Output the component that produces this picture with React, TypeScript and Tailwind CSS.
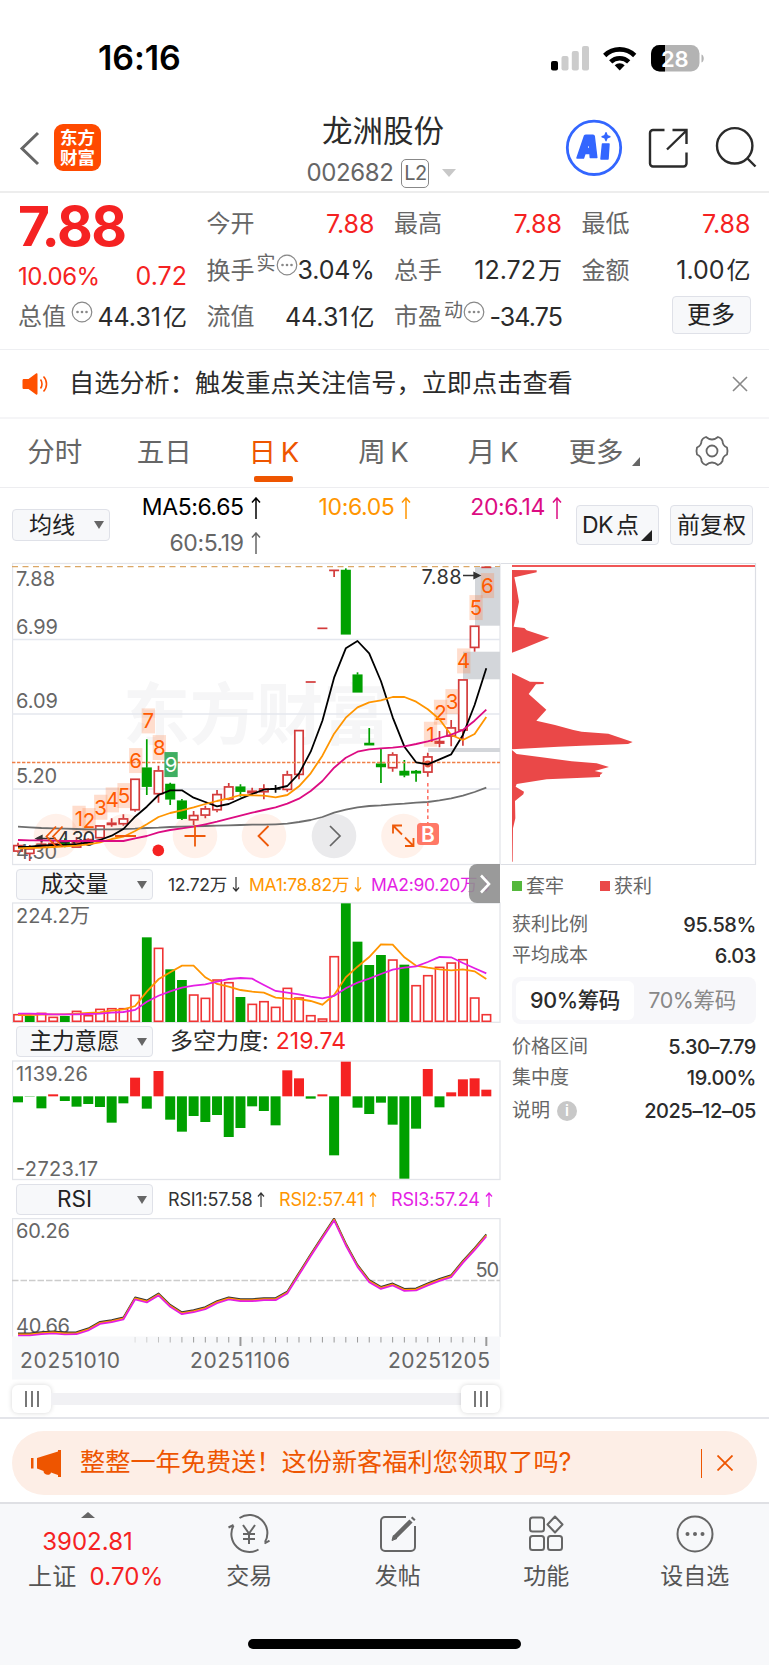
import type { ReactNode } from 'react'

const STEP = 11.708
const cx = (i: number) => 18 + STEP * i

// [kind, high, top, bottom, low], 3 units per px, measured down from y = 555
type Candle = [string, number, number, number, number]

const candles: Candle[] = [
  ['r', 863, 870, 890, 893], ['r', 870, 880, 897, 918], ['r', 852, 866, 876, 880], ['r', 858, 864, 872, 875],
  ['g', 850, 858, 872, 877], ['r', 846, 862, 878, 878], ['r', 850, 852, 868, 870], ['r', 811, 811, 850, 850],
  ['r', 790, 803, 810, 815], ['r', 778, 790, 808, 812], ['r', 671, 671, 766, 770], ['g', 553, 638, 695, 720],
  ['r', 632, 646, 718, 743], ['g', 683, 687, 733, 750], ['g', 732, 737, 791, 795], ['r', 768, 780, 796, 810],
  ['r', 752, 760, 782, 790], ['r', 705, 717, 766, 772], ['r', 684, 694, 734, 736], ['g', 688, 695, 710, 725],
  ['r', 698, 707, 715, 720], ['r', 688, 700, 712, 733], ['k', 690, 702, 704, 713], ['r', 647, 658, 705, 710],
  ['r', 525, 525, 660, 673], ['d', 381, 381, 381, 381], ['d', 220, 220, 220, 220], ['d', 46, 46, 46, 66],
  ['g', 40, 45, 238, 238], ['g', 352, 359, 412, 412], ['g', 519, 564, 570, 570], ['g', 582, 626, 636, 684],
  ['r', 592, 598, 640, 650], ['g', 615, 648, 661, 667], ['g', 645, 648, 655, 680], ['r', 593, 604, 653, 665],
  ['r', 528, 558, 566, 577], ['r', 495, 517, 545, 574], ['r', 373, 373, 527, 572], ['r', 212, 212, 279, 290],
  ['d', 37, 37, 37, 37],
]

const ma5 = [876, 875, 872, 870, 869, 868, 862, 855, 842, 822, 785, 755, 720, 706, 706, 728, 741, 754, 747, 731, 717, 704, 701, 693, 656, 590, 497, 368, 280, 258, 295, 378, 487, 575, 622, 628, 613, 598, 540, 450, 340]
const ma10 = [880, 879, 878, 876, 874, 872, 868, 862, 852, 845, 828, 808, 786, 774, 766, 757, 747, 738, 730, 720, 721, 722, 727, 720, 694, 655, 602, 536, 488, 457, 442, 436, 426, 426, 440, 463, 493, 540, 555, 537, 486]
const ma20 = [855, 856, 856, 857, 858, 858, 858, 858, 858, 858, 850, 843, 832, 825, 820, 815, 808, 800, 791, 782, 773, 765, 757, 746, 731, 708, 678, 638, 608, 590, 583, 580, 578, 574, 567, 559, 549, 539, 525, 497, 464]
const ma60 = [815, 817, 819, 820, 821, 822, 823, 823, 823, 822, 821, 819, 818, 816, 815, 814, 813, 812, 811, 810, 809, 809, 808, 806, 801, 795, 786, 773, 764, 757, 753, 751, 748, 746, 743, 741, 736, 730, 722, 711, 698]

const volume = [462, 468, 458, 470, 468, 452, 465, 446, 444, 444, 404, 232, 263, 328, 360, 403, 413, 358, 366, 411, 431, 423, 440, 383, 412, 465, 475, 288, 130, 245, 315, 285, 298, 314, 375, 345, 320, 307, 297, 412, 462]
const volumeDown = [1, 4, 11, 13, 14, 19, 28, 29, 30, 31, 33]
const volMa1 = [465, 465, 464, 463, 463, 461, 459, 457, 452, 448, 438, 395, 358, 337, 317, 317, 352, 372, 380, 390, 395, 398, 413, 416, 417, 423, 434, 405, 352, 320, 291, 253, 254, 292, 317, 323, 328, 331, 328, 334, 357]
const volMa2 = [461, 461, 462, 463, 463, 463, 462, 461, 458, 456, 450, 425, 407, 394, 383, 377, 373, 365, 357, 354, 356, 375, 393, 398, 403, 410, 415, 408, 385, 368, 356, 342, 329, 323, 319, 306, 291, 292, 309, 325, 340]

const force = [727, 710, 745, 703, 723, 740, 732, 741, 788, 730, 653, 746, 633, 779, 815, 768, 786, 765, 831, 804, 739, 753, 796, 631, 655, 716, 703, 886, 605, 743, 762, 728, 794, 956, 806, 627, 742, 697, 658, 655, 689]

const rsi = [463, 463, 459, 457, 460, 459, 448, 428, 423, 415, 355, 364, 343, 377, 399, 393, 384, 366, 355, 360, 360, 357, 357, 337, 281, 225, 171, 118, 193, 257, 303, 323, 313, 329, 328, 313, 299, 288, 245, 207, 166]

// TD sequence marks: [digit, x, centre y]
const marks: [string, number, number][] = [
  ['1', 79, 790], ['2', 89, 797], ['3', 100.7, 757], ['4', 112.3, 735], ['5', 124, 722], ['6', 135.7, 617],
  ['7', 148.3, 498], ['8', 159.3, 578], ['9', 171, 629],
  ['1', 430.5, 538], ['2', 440.5, 472], ['3', 452, 440], ['4', 463.7, 318], ['5', 476, 158], ['6', 487.4, 92],
]

const line = (ys: number[], top: number, dy = 0) =>
  ys.map((y, i) => `${cx(i).toFixed(1)},${(top + y / 3 + dy).toFixed(1)}`).join(' ')

function Label({ x, y, w, size = 20, fill = '#666', weight = 400, children }: {
  x: number; y: number; w: number; size?: number; fill?: string; weight?: number; children: ReactNode
}) {
  return (
    <text x={x} y={y + size * 0.364} fontSize={size} fill={fill} fontWeight={weight} textLength={w}>
      {children}
    </text>
  )
}

function Dots() {
  return (
    <svg className="mb-[11px] h-[22px] w-[22px] shrink-0" viewBox="0 0 22 22">
      <circle cx="11" cy="11" r="9.8" fill="none" stroke="#888" strokeWidth="1.2" />
      {[6.5, 11, 15.5].map((x) => <circle key={x} cx={x} cy="11" r="1.3" fill="#888" />)}
    </svg>
  )
}

function Stat({ label, sup, dots, value, unit, className = 'text-[#2b2b2b]' }: {
  label: string; sup?: string; dots?: boolean; value: string; unit?: string; className?: string
}) {
  return (
    <div className="flex h-[46.5px] items-center text-2xl leading-none whitespace-nowrap">
      <span className="text-[#666]">{label}</span>
      {sup && <span className="mb-[14px] ml-[2px] text-[19px] leading-none text-[#666]">{sup}</span>}
      {dots && !sup && <i className="w-[5px]" />}
      {dots && <Dots />}
      <span className={`ml-auto text-[25px] leading-none ${className}`}>
        {value}
        {unit && <span className="ml-[2px] text-2xl leading-none">{unit}</span>}
      </span>
    </div>
  )
}

function Arrow({ down, small }: { down?: boolean; small?: boolean }) {
  return (
    <svg
      className={small ? 'ml-[5px] inline-block h-[15px] w-[8px] shrink-0' : 'ml-[7px] inline-block h-[22px] w-[10px] shrink-0'}
      viewBox={small ? '0 0 8 15' : '0 0 10 22'}
      fill="none"
      stroke="currentColor"
      strokeWidth={small ? 1.2 : 1.5}
    >
      {small && !down && <path d="M4 15V1M1 4.500L4 1L7 4.500" />}
      {small && down && <path d="M4 0V14M1 10.500L4 14L7 10.500" />}
      {!small && <path d="M5 22V1M1 5.500L5 1L9 5.500" />}
    </svg>
  )
}

function Caret() {
  return <svg className="h-2 w-[10px]" viewBox="0 0 10 8"><path d="M0 0h10L5 8z" fill="#666" /></svg>
}

function Picker({ label }: { label: string }) {
  return (
    <div className="ml-[4px] flex h-[31px] w-[137px] shrink-0 items-center rounded border border-[#dfe1e8] bg-[#f7f8fa]">
      <span className="flex-1 pr-[5px] text-center text-[22.500px] leading-none tracking-normal text-[#222]">{label}</span>
      <span className="mr-[5px] flex"><Caret /></span>
    </div>
  )
}

function Frame({ y, h }: { y: number; h: number }) {
  return <rect x="12.5" y={y} width="487.5" height={h} fill="none" stroke="#e3e5ea" strokeWidth="1.3" />
}

function PriceChart() {
  const Y = (v: number) => 555 + v / 3
  return (
    <svg className="block h-[304px] w-[489px]" viewBox="12 562 489 304">
      <text x="123" y="739" fontSize="67" fontWeight="700" fill="#f6f6f7" textLength="267">东方财富</text>
      <Frame y={563.5} h={301} />
      {[639.5, 714, 789].map((y) => <path key={y} d={`M12 ${y}H500`} stroke="#e4e7ee" strokeWidth="1.5" />)}
      <path d="M12 566.7H500" stroke="#dba766" strokeWidth="1.2" strokeDasharray="6 4.5" />
      <g fill="#d3d6da">
        <rect x="475" y="567" width="25" height="58.7" />
        <rect x="463" y="651.7" width="37" height="27.6" />
        <rect x="428" y="748" width="72" height="4" />
      </g>
      {[56, 125, 195, 264, 403.5].map((x) => <circle key={x} cx={x} cy="836" r="22.3" fill="#fff1ea" />)}
      <circle cx="334" cy="836" r="22.3" fill="#eaeaec" />
      {candles.map(([kind, hi, top, bottom, lo], i) => {
        const x = cx(i)
        const color = kind === 'g' ? '#00a000' : kind === 'k' ? '#111' : '#d33a3a'
        if (kind === 'd' || kind === 'k') {
          return <path key={i} d={`M${x - 5} ${Y(top)}h10M${x} ${Y(hi)}V${Y(lo)}`} stroke={color} strokeWidth="1.7" />
        }
        return (
          <g key={i} stroke={color} strokeWidth="1.7">
            <path d={`M${x} ${Y(hi)}V${Y(top)}M${x} ${Y(bottom)}V${Y(lo)}`} />
            <rect x={x - 4.2} y={Y(top) + 0.6} width="8.4" height={Math.max(Y(bottom) - Y(top) - 1.2, 1)} fill={kind === 'g' ? color : '#fff'} />
          </g>
        )
      })}
      <path d="M12 762.5H500" stroke="#f08048" strokeWidth="1.5" strokeDasharray="3.4 1.6" />
      <circle cx="427.8" cy="764" r="3.4" fill="#e0523a" />
      {marks.map(([n, x, y], i) => (
        <g key={i}>
          <rect x={x - 6.6} y={Y(y) - 12.6} width="13.3" height="25" fill={n === '9' ? '#3fae62' : '#ff7a3c'} fillOpacity={n === '9' ? 1 : 0.26} />
          <text x={x} y={Y(y) + 7.4} textAnchor="middle" fontSize="20.5" fill={n === '9' ? '#fff' : '#ff5a00'}>{n}</text>
        </g>
      ))}
      <Label x={16} y={578.5} w={39}>7.88</Label>
      <Label x={16} y={626.5} w={42}>6.99</Label>
      <Label x={16} y={701} w={42}>6.09</Label>
      <Label x={16} y={776} w={41}>5.20</Label>
      <Label x={57} y={838.5} w={38} fill="#333">4.30</Label>
      <path d="M36 838.5H56M36 838.5l6-3v6z" stroke="#333" strokeWidth="1.3" fill="#333" />
      <Label x={16} y={852} w={41}>4.30</Label>
      <Label x={421.500} y={576.5} w={40} fill="#333">7.88</Label>
      <path d="M463 575.5H479M480 575.5l-6-3v6z" stroke="#333" strokeWidth="1.3" fill="#333" />
      <g fill="none" strokeWidth="1.8" strokeLinejoin="round">
        <polyline points={line(ma60, 555)} stroke="#6e6e6e" />
        <polyline points={line(ma5, 555)} stroke="#000" />
        <polyline points={line(ma10, 555)} stroke="#ff9500" />
        <polyline points={line(ma20, 555)} stroke="#dc0c82" />
      </g>
      <g fill="none" stroke="#ee5a0a" strokeWidth="1.8">
        <path d="M56 826.500L46.500 836.500L56 846.500M62.500 826.500L53 836.500L62.500 846.500" />
        <path d="M115 836H136M184.500 836H205.500M195 825.500V846.500" />
        <path d="M268.500 826L258.500 836L268.500 846" />
        <path d="M402 834.500L393 825.500M393 833.500V825.500H402M405 837.500L413.500 846M413.500 838V846H405" />
      </g>
      <path d="M330 826L340 836L330 846" fill="none" stroke="#666" strokeWidth="1.7" />
      <circle cx="158.3" cy="850.4" r="5.8" fill="#f52222" />
      <path d="M427.800 783V823" stroke="#ff7468" strokeWidth="1.6" strokeDasharray="3.5 3" />
      <rect x="417" y="823" width="22" height="22" rx="3.500" fill="#ff7866" />
      <text x="428" y="841.500" textAnchor="middle" fontSize="21" fontWeight="600" fill="#fff">B</text>
    </svg>
  )
}

function ChipChart() {
  return (
    <svg className="block h-[304px] w-[268px]" viewBox="501 562 268 304">
      <path d="M501 563.5H755.500V864.500H501" fill="none" stroke="#dcdee4" strokeWidth="1.2" />
      <path d="M512 566H755" stroke="#f05656" strokeWidth="2" />
      <g transform="translate(500 555) scale(.33333)" fill="#ea4848">
        <path d="M36 45L110 46V52L43 67L50 100L57 140L50 175L41 215L73 219L80 226L148 248L73 279L36 293Z" />
        <path d="M36 354L90 380L131 381V387L108 388L86 417L139 464L109 497L165 510L220 525L245 530L325 536L398 561L384 567L245 572L175 575L36 583Z" />
        <path d="M36 585L50 597L125 607L215 619L290 625L327 636L284 648L308 653L300 660V666L248 668L140 673L50 687L47 695L72 710L70 718L45 738L46 790L39 820L38 920H36Z" />
      </g>
    </svg>
  )
}

function VolumeChart() {
  return (
    <svg className="block h-[121px] w-[489px]" viewBox="12 902 489 121">
      <Frame y={903} h={119.300} />
      {volume.map((v, i) => {
        const y = 860 + v / 3
        return volumeDown.includes(i)
          ? <rect key={i} x={cx(i) - 4.900} y={y} width="9.800" height={1022 - y} fill="#00a000" />
          : <rect key={i} x={cx(i) - 4.100} y={y + 0.700} width="8.400" height={Math.max(1021.300 - y - 0.700, 1)} fill="#fff" stroke="#f03434" strokeWidth="1.600" />
      })}
      <polyline points={line(volMa1, 860)} fill="none" stroke="#ff9500" strokeWidth="1.8" />
      <polyline points={line(volMa2, 860)} fill="none" stroke="#e41ee4" strokeWidth="1.8" />
      <Label x={16} y={916} w={74}>224.2万</Label>
    </svg>
  )
}

function ForceChart() {
  return (
    <svg className="block h-[121px] w-[489px]" viewBox="12 1060 489 121">
      <Frame y={1061} h={118.500} />
      {force.map((v, i) => (
        <rect
          key={i}
          x={cx(i) - 5}
          y={860 + Math.min(v, 709) / 3}
          width="10"
          height={Math.abs(v - 709) / 3}
          fill={v > 709 ? '#00a000' : '#f52222'}
        />
      ))}
      <Label x={16} y={1073.500} w={72}>1139.26</Label>
      <Label x={16} y={1168.500} w={82}>-2723.17</Label>
    </svg>
  )
}

function RsiChart() {
  return (
    <svg className="block h-[163px] w-[489px]" viewBox="12 1218 489 163">
      <path d="M12.500 1337V1218.700H500V1337" fill="none" stroke="#e3e5ea" strokeWidth="1.300" />
      <rect x="12" y="1336.500" width="488" height="43" fill="#f7f8fa" />
      <path d="M12 1280.400H500" stroke="#ccc" strokeWidth="1.500" strokeDasharray="6.500 2" />
      <Label x={16} y={1231} w={54}>60.26</Label>
      <Label x={16} y={1326} w={54}>40.66</Label>
      <Label x={475.500} y={1270} w={23.500}>50</Label>
      <g fill="none" strokeWidth="1.700" strokeLinejoin="round">
        <polyline points={line(rsi, 1180, -0.900)} stroke="#333" />
        <polyline points={line(rsi, 1180, 0.100)} stroke="#ff9500" />
        <polyline points={line(rsi, 1180, 1.200)} stroke="#e41ee4" />
      </g>
      {rsi.map((_, i) => i > 9 && (
        <path
          key={i}
          d={`M${cx(i)} 1337V${i === 19 || i === 40 ? 1346 : 1342.500}`}
          stroke="#999"
          strokeWidth={i === 19 || i === 40 ? 2 : 1}
          opacity={Math.min(1, (i - 8) / 7)}
        />
      ))}
      <Label x={20} y={1360} w={100} size={21}>20251010</Label>
      <Label x={190} y={1360} w={100} size={21}>20251106</Label>
      <Label x={388} y={1360} w={102} size={21}>20251205</Label>
    </svg>
  )
}

function Handle() {
  return (
    <div className="flex h-[28px] w-[39px] items-center justify-center gap-[4px] rounded-md bg-white shadow-[0_0_5px_rgba(0,0,0,0.16)]">
      <i className="h-4 w-[2px] bg-[#777]" />
      <i className="h-4 w-[2px] bg-[#777]" />
      <i className="h-4 w-[2px] bg-[#777]" />
    </div>
  )
}

function Info({ label, value, info }: { label: string; value: string; info?: boolean }) {
  return (
    <div className="flex h-[31px] items-center justify-between leading-none">
      <span className="flex items-center text-[19px] text-[#666]">
        {label}
        {info && <span className="ml-[7px] flex h-5 w-5 items-center justify-center rounded-full bg-[#c8c8c8] text-[15px] font-semibold leading-none text-white">i</span>}
      </span>
      <span className="text-xl font-medium leading-none tracking-[-0.4px] text-[#2b2b2b]">{value}</span>
    </div>
  )
}

function NavItem({ label, children }: { label: string; children: ReactNode }) {
  return (
    <div className="flex w-[148.500px] flex-col items-center">
      <svg className="mt-[8px] h-[44px] w-[44px]" viewBox="0 0 44 44" fill="none" stroke="#666" strokeWidth="2">{children}</svg>
      <span className="mt-[9px] text-[23px] leading-none text-[#555]">{label}</span>
    </div>
  )
}

const tabs = ['分时', '五日', '日 K', '周 K', '月 K']

export default function App() {
  return (
    <div className="flex h-[1665px] w-[769px] flex-col overflow-hidden bg-white font-['Inter','Noto_Sans_CJK_SC',sans-serif]">
      <div className="flex h-[108px] shrink-0 items-center pl-[98px] pt-[7px]">
        <span className="text-[34px] font-semibold leading-none tracking-[-0.1px] text-black">16:16</span>
        <svg className="ml-auto mr-[63px] h-[30px] w-[156px]" viewBox="550 42 156 30">
          <rect x="551" y="60" width="7" height="9.500" rx="2" fill="#000" />
          <g fill="#ccc">
            <rect x="561.500" y="55" width="7" height="14.500" rx="2" />
            <rect x="571.800" y="50" width="7" height="19.500" rx="2" />
            <rect x="582" y="45" width="7" height="24.500" rx="2" />
          </g>
          <g fill="none" stroke="#000" strokeWidth="4.600">
            <path d="M604.700 54.500a21.500 21.500 0 0 1 30 0" />
            <path d="M610.700 60.800a13 13 0 0 1 18 0" />
          </g>
          <path d="M619.700 69.500l-5-5.300a7.600 7.600 0 0 1 10 0z" />
          <rect x="651" y="44" width="48.500" height="26.500" rx="8.500" fill="#b3b3b3" />
          <path d="M665 44H659.500a8.500 8.500 0 0 0-8.500 8.500V62a8.500 8.500 0 0 0 8.500 8.500H665z" />
          <path d="M701.500 53.500c3 1 3 7 0 8z" fill="#b3b3b3" />
          <text x="661" y="65.500" fontSize="22" fontWeight="600" fill="#fff" textLength="27.500">28</text>
        </svg>
      </div>

      <div className="flex h-[85px] shrink-0 border-b-2 border-[#ededed]">
        <div className="flex w-[292px] items-center pl-[19px] pb-[4px]">
          <svg className="h-9 w-[22px]" viewBox="0 0 22 36"><path d="M19 3L3 18.500L19 34" fill="none" stroke="#666" strokeWidth="3" /></svg>
          <div className="ml-[13px] flex h-[47px] w-[47px] flex-col items-center justify-center rounded-[9px] bg-[#ff4a00] text-[17.500px] font-bold leading-[20px] text-white">
            <span>东方</span>
            <span>财富</span>
          </div>
        </div>
        <div className="flex w-[184px] flex-col items-center">
          <span className="mt-[8px] mr-[2px] text-[30.500px] leading-none text-[#2b2b2b]">龙洲股份</span>
          <div className="mt-[12px] flex items-center pr-[5px]">
            <span className="text-2xl leading-none tracking-[-0.4px] text-[#666]">002682</span>
            <span className="ml-[8px] flex h-[29px] w-[28px] items-center justify-center rounded-[5px] border-[1.500px] border-[#888] text-[20px] leading-none tracking-tight text-[#666]">L2</span>
            <svg className="ml-[13px] h-2 w-[14px]" viewBox="0 0 14 8"><path d="M0 0h14L7 8z" fill="#c8c8c8" /></svg>
          </div>
        </div>
        <svg className="ml-[84px] mt-[8px] h-[64px] w-[204px]" viewBox="560 116 204 64">
          <circle cx="594" cy="147.800" r="26.700" fill="none" stroke="#3366ff" strokeWidth="2.800" />
          <g fill="#3366ff" stroke="#3366ff" strokeWidth="1.500" strokeLinejoin="round">
            <path fillRule="evenodd" d="M577 158L584.500 136Q585 135.200 586 135.200H593Q594 135.200 594.200 136.200L596.800 157.500H590.300L590 153.500H585L583.500 158zM586.800 148.500H589.800L589.500 141.500z" />
            <path d="M602.500 144H609L608 159H601z" />
            <path d="M606 132.800l1.100 2.800 2.800 1.100-2.800 1.100-1.100 2.800-1.100-2.800-2.800-1.100 2.800-1.100z" />
          </g>
          <g fill="none" stroke="#2b2b2b" strokeWidth="2.400">
            <path d="M664.500 130H653a3 3 0 0 0-3 3V163.500a3 3 0 0 0 3 3H683.500a3 3 0 0 0 3-3V152.500M672.500 130H686.500V144M686.500 130.500L667 149.500" />
            <circle cx="734.700" cy="145.800" r="17.700" />
            <path d="M747.500 158.500L755.500 166.500" />
          </g>
        </svg>
      </div>

      <div className="flex h-[157px] shrink-0 gap-[19.500px] border-b border-[#eeeff2] pl-[18px]">
        <div className="w-[169px]">
          <div className="flex h-[66px] items-center text-[55px] font-bold leading-none tracking-[-1.500px] text-[#f52222]">7.88</div>
          <div className="flex h-[35px] items-center justify-between text-2xl leading-none tracking-[-0.4px] text-[#f52222]">
            <span>10.06%</span>
            <span className="text-[25px] leading-none tracking-normal">0.72</span>
          </div>
          <Stat label="总值" dots value="44.31" unit="亿" />
        </div>
        <div className="w-[168px] pt-[8px]">
          <Stat label="今开" value="7.88" className="text-[#f52222]" />
          <Stat label="换手" sup="实" dots value="3.04%" className="tracking-[-0.2px] text-[#2b2b2b]" />
          <Stat label="流值" value="44.31" unit="亿" />
        </div>
        <div className="w-[168px] pt-[8px]">
          <Stat label="最高" value="7.88" className="text-[#f52222]" />
          <Stat label="总手" value="12.72" unit="万" />
          <Stat label="市盈" sup="动" dots value="-34.75" className="tracking-[-0.9px] text-[#2b2b2b]" />
        </div>
        <div className="w-[169px] pt-[8px]">
          <Stat label="最低" value="7.88" className="text-[#f52222]" />
          <Stat label="金额" value="1.00" unit="亿" />
          <div className="mt-[2px] ml-auto flex h-[38px] w-[79px] items-center justify-center rounded border border-[#dfe1e8] bg-[#f7f8fa] text-2xl leading-none text-[#222]">更多</div>
        </div>
      </div>

      <div className="flex h-[69px] shrink-0 items-center border-b-2 border-[#f5f5f7] pl-[22px] pr-[21px]">
        <svg className="h-6 w-[26px]" viewBox="0 0 26 24">
          <path d="M2 7H6.500L14 1.500C15 1 15.500 1.500 15.500 2.500V21.500C15.500 22.500 15 23 14 22.500L6.500 17H2C1 17 .5 16.500 .5 15.500V8.500C.5 7.500 1 7 2 7z" fill="#ff5000" />
          <path d="M18.500 7.500c2 2.500 2 6.500 0 9M21.500 4.500c4 4 4 11 0 15" fill="none" stroke="#ff5000" strokeWidth="1.600" />
        </svg>
        <span className="ml-[21px] text-[25.200px] leading-none text-[#2b2b2b]">自选分析：触发重点关注信号，立即点击查看</span>
        <svg className="ml-auto h-4 w-4" viewBox="0 0 16 16"><path d="M1 1L15 15M15 1L1 15" stroke="#888" strokeWidth="1.600" /></svg>
      </div>

      <div className="grid h-[68px] w-[767px] shrink-0 grid-cols-7 text-[27.500px] leading-none text-[#666]">
        {tabs.map((t) => (
          <div key={t} className={t === '日 K' ? 'flex flex-col items-center text-[#ee5500]' : 'flex flex-col items-center'}>
            <span className="mt-[20px] leading-none [word-spacing:-3px]">{t}</span>
            {t === '日 K' && <i className="mt-[9px] h-[6px] w-[39px] rounded-[2px] bg-[#ee5500]" />}
          </div>
        ))}
        <div className="flex justify-center pl-[3px]">
          <span className="mt-[20px] leading-none">更多</span>
          <svg className="mt-[38px] ml-[8px] h-[9px] w-[8px]" viewBox="0 0 8 9"><path d="M8 0V9H0z" fill="#666" /></svg>
        </div>
        <svg className="mx-auto mt-[16px] h-[32px] w-[34px]" viewBox="0 0 34 32" fill="none" stroke="#666" strokeWidth="1.800" strokeLinejoin="round">
          <path d="M11 2Q14 4.500 17 4.500T23 2Q26.500 3 27.500 6Q27.500 10.500 32 12.500Q33 16 32 19.500Q27.500 21.500 27.500 26Q26 29 23 30Q20 27.500 17 27.500T11 30Q7.500 29 6.500 26Q6.500 21.500 2 19.500Q1 16 2 12.500Q6.500 10.500 6.500 6Q7.500 3 11 2z" />
          <circle cx="17" cy="16" r="5.500" />
        </svg>
      </div>

      <div className="flex h-[75px] shrink-0 border-t border-[#ededf0] pl-[12px] text-[23px] leading-none">
        <div className="mt-[21px] flex h-[32px] w-[98px] items-center rounded border border-[#dfe1e8] bg-[#f7f8fa]">
          <span className="ml-[16px] text-[#222]">均线</span>
          <span className="ml-auto mr-[5px] flex"><Caret /></span>
        </div>
        <div className="grid h-[73px] w-[452px] grid-cols-3 grid-rows-2 pt-[2px] tracking-[-0.4px]">
          <span className="flex items-center justify-end text-black">MA5:6.65<Arrow /></span>
          <span className="flex items-center justify-end text-[#ff9500]">10:6.05<Arrow /></span>
          <span className="flex items-center justify-end text-[#dc0c82]">20:6.14<Arrow /></span>
          <span className="flex items-center justify-end text-[#666]">60:5.19<Arrow /></span>
        </div>
        <div className="mt-[17px] ml-[14px] flex h-[40px] w-[83px] items-center rounded border border-[#dfe1e8] bg-[#f7f8fa] pl-[5px] tracking-[-0.5px] whitespace-nowrap text-[#222] [word-spacing:-3px]">
          DK 点
          <svg className="mt-[20px] ml-[2px] h-[11px] w-[11px] shrink-0" viewBox="0 0 11 11"><path d="M11 0V11H0z" fill="#222" /></svg>
        </div>
        <div className="mt-[17px] ml-[11px] flex h-[40px] w-[83px] items-center justify-center rounded border border-[#dfe1e8] bg-[#f7f8fa] text-[#222]">前复权</div>
      </div>

      <div className="flex h-[857px] shrink-0 border-b-2 border-[#e4e5ea] pl-[12px]">
        <div className="w-[489px]">
          <PriceChart />
          <div className="relative flex h-[36px] items-center pt-[1px] text-[17.500px] leading-none tracking-[-0.3px] whitespace-nowrap">
            <Picker label="成交量" />
            <span className="ml-[15px] flex w-[81px] items-center text-[#333]">12.72万<Arrow small down /></span>
            <span className="flex w-[122px] items-center text-[#ff9500]">MA1:78.82万<Arrow small down /></span>
            <span className="flex items-center text-[#e41ee4]">MA2:90.20万<Arrow small down /></span>
            <div className="absolute top-[-2px] right-[1px] flex h-[39px] w-[31px] items-center justify-center rounded-l-lg bg-[#8f8f8f]/90">
              <svg className="h-5 w-3" viewBox="0 0 12 20"><path d="M2 1.500L10 10L2 18.500" fill="none" stroke="#fff" strokeWidth="2.600" /></svg>
            </div>
          </div>
          <VolumeChart />
          <div className="flex h-[37px] items-center text-[23px] leading-none whitespace-nowrap">
            <Picker label="主力意愿" />
            <span className="ml-[17px] text-[#2b2b2b]">多空力度:</span>
            <span className="ml-[7px] tracking-[0.1px] text-[#f52222]">219.74</span>
          </div>
          <ForceChart />
          <div className="flex h-[37px] items-center text-[18px] leading-none tracking-[-0.2px] whitespace-nowrap">
            <Picker label="RSI" />
            <span className="ml-[15px] flex w-[111px] items-center text-[#333]">RSI1:57.58<Arrow small /></span>
            <span className="flex w-[112px] items-center text-[#ff9500]">RSI2:57.41<Arrow small /></span>
            <span className="flex items-center text-[#e41ee4]">RSI3:57.24<Arrow small /></span>
          </div>
          <RsiChart />
          <div className="flex h-[36px] w-[488px] items-center">
            <Handle />
            <i className="h-[12px] flex-1 bg-[#f1f1f4]" />
            <Handle />
          </div>
        </div>

        <div className="w-[268px]">
          <ChipChart />
          <div className="ml-[11px] w-[244px]">
            <div className="flex h-[40px] items-center text-[19px] leading-none text-[#666]">
              <i className="mr-[4px] h-[10px] w-[10px] bg-[#55b83c]" />套牢
              <i className="mr-[4px] ml-[36px] h-[10px] w-[10px] bg-[#ea4848]" />获利
            </div>
            <div className="pt-[3px]">
              <Info label="获利比例" value="95.58%" />
              <Info label="平均成本" value="6.03" />
            </div>
            <div className="mt-[6px] flex h-[47px] items-center rounded-lg bg-[#f7f7fa] p-1 text-[21.500px] leading-none tracking-[-0.4px]">
              <div className="flex h-full w-[118px] items-center justify-center rounded-md bg-white font-medium text-[#2b2b2b]">90%筹码</div>
              <div className="flex-1 pr-[2px] text-center text-[#888]">70%筹码</div>
            </div>
            <div className="pt-[7px]">
              <Info label="价格区间" value="5.30–7.79" />
              <Info label="集中度" value="19.00%" />
              <div className="h-[2px]" />
              <Info label="说明" value="2025–12–05" info />
            </div>
          </div>
        </div>
      </div>

      <div className="h-[85px] shrink-0 border-b-2 border-[#dfe0e4] px-[12px] pt-[12px]">
        <div className="flex h-[64px] items-center rounded-full bg-[#fdeee6] pl-[19px] pr-[24px]">
          <svg className="h-[27px] w-[31px]" viewBox="0 0 31 27" fill="#ee5500">
            <path d="M0 8h2.500v10.500H0zM6 8L27 1.500V0H30V27H27V25L20 22.500C19.500 26 12.500 25.500 12.500 21L6 18.500z" />
          </svg>
          <span className="ml-[18px] text-[25.200px] leading-none text-[#ee5500]">整整一年免费送！这份新客福利您领取了吗?</span>
          <i className="ml-auto h-[29px] w-[1.500px] bg-[#ee5500]" />
          <svg className="ml-[15px] h-4 w-4" viewBox="0 0 16 16"><path d="M.5 .5L15.500 15.500M15.500 .5L.5 15.500" stroke="#ee5500" strokeWidth="1.800" /></svg>
        </div>
      </div>

      <div className="flex h-[161px] shrink-0 flex-col bg-[#f7f8fa]">
        <div className="flex h-[135px]">
          <div className="flex w-[175px] flex-col items-center text-2xl leading-none text-[#f52222]">
            <svg className="mt-[8px] h-[6px] w-[14px]" viewBox="0 0 14 6"><path d="M0 6h14L7 0z" fill="#666" /></svg>
            <span className="mt-[12px] leading-none">3902.81</span>
            <span className="mt-[11px] w-[175px] pl-[28px] leading-none tracking-[0.2px] whitespace-nowrap"><span className="mr-[13px] text-[#555]">上证</span>0.70%</span>
          </div>
          <NavItem label="交易">
            <path d="M12.500 6A18 18 0 0 1 38 30M37.500 31.500l5-2.800M6.500 13.500A18 18 0 0 0 31.500 37.500M1.500 15.500L6.500 13" />
            <path d="M16 13L22 21.500L28 13M22 21.500V32M16 22H28M16 27H28" />
          </NavItem>
          <NavItem label="发帖">
            <path d="M30 5H9a4 4 0 0 0-4 4V35a4 4 0 0 0 4 4H35a4 4 0 0 0 4-4V14" />
            <path d="M19 25L35 9M36.500 7.500L38 6" strokeWidth="4.500" />
            <path d="M16 28.500L17.300 23.500L21 26.500z" fill="#666" strokeWidth="1" />
          </NavItem>
          <NavItem label="功能">
            <rect x="6" y="5.500" width="14" height="14" rx="2.500" />
            <rect x="6" y="24" width="14" height="14" rx="2.500" />
            <rect x="24" y="24" width="14" height="14" rx="2.500" />
            <path d="M31 4.500L38.500 12.500L31 20.500L23.500 12.500z" strokeLinejoin="round" />
          </NavItem>
          <NavItem label="设自选">
            <circle cx="22" cy="22" r="17.500" />
            {[14.500, 22, 29.500].map((x) => <circle key={x} cx={x} cy="22" r="2" fill="#666" stroke="none" />)}
          </NavItem>
        </div>
        <div className="mx-auto h-[10px] w-[273px] rounded-full bg-black" />
      </div>
    </div>
  )
}
